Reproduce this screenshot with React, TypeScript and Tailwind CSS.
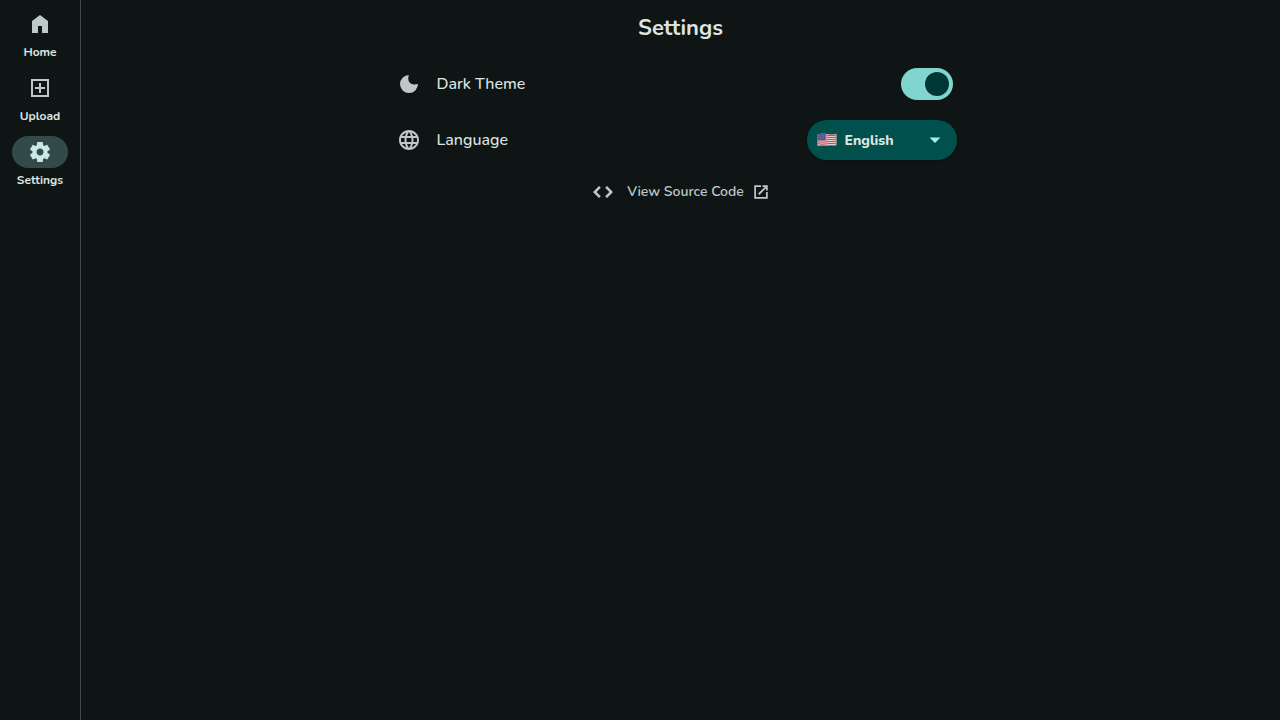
import { useState } from "react";

function Icon({ d, className = "size-6" }: { d: string; className?: string }) {
  return (
    <svg viewBox="0 0 24 24" fill="currentColor" fillRule="evenodd" aria-hidden="true" className={className}>
      <path d={d} />
    </svg>
  );
}

const icons = {
  home: "M4 21V9l8-6 8 6v12h-6v-7h-4v7H4Z",
  upload: "M11 17h2v-4h4v-2h-4V7h-2v4H7v2h4v4ZM3 21V3h18v18H3Zm2-2h14V5H5v14Z",
  settings:
    "m9.25 22-.4-3.2q-.325-.125-.612-.3-.288-.175-.563-.375L4.7 19.375l-2.75-4.75 2.575-1.95Q4.5 12.5 4.5 12.337v-.675q0-.162.025-.337L1.95 9.375l2.75-4.75 2.975 1.25q.275-.2.575-.375.3-.175.6-.3L9.25 2h5.5l.4 3.2q.325.125.613.3.287.175.562.375l2.975-1.25 2.75 4.75-2.575 1.95q.025.175.025.337v.675q0 .163-.05.338l2.575 1.95-2.75 4.75-2.95-1.25q-.275.2-.575.375-.3.175-.6.3l-.4 3.2Zm2.8-6.5q1.45 0 2.475-1.025Q15.55 13.45 15.55 12q0-1.45-1.025-2.475Q13.5 8.5 12.05 8.5q-1.475 0-2.488 1.025Q8.55 10.55 8.55 12q0 1.45 1.012 2.475Q10.575 15.5 12.05 15.5Z",
  moon: "M12 21q-3.75 0-6.375-2.625T3 12q0-3.75 2.625-6.375T12 3q-.75 1.2-.75 3.750 0 2.500 1.550 4.100 1.600 1.550 4.100 1.550 2.550 0 4.100-.4 0 3.750-2.625 6.375T12 21Z",
  globe:
    "M11.99 2C6.47 2 2 6.48 2 12s4.47 10 9.99 10C17.52 22 22 17.52 22 12S17.52 2 11.99 2Zm6.93 6h-2.95a15.65 15.65 0 0 0-1.38-3.56A8.03 8.03 0 0 1 18.92 8ZM12 4.04c.83 1.2 1.48 2.53 1.91 3.96h-3.82c.43-1.43 1.08-2.76 1.91-3.96ZM4.26 14C4.1 13.36 4 12.69 4 12s.1-1.36.26-2h3.38c-.08.66-.14 1.32-.14 2s.06 1.34.14 2H4.26Zm.82 2h2.95c.32 1.25.78 2.45 1.38 3.56A7.99 7.99 0 0 1 5.08 16Zm2.95-8H5.08a7.99 7.99 0 0 1 4.33-3.56A15.65 15.65 0 0 0 8.03 8ZM12 19.96c-.83-1.2-1.48-2.53-1.91-3.96h3.82A14.1 14.1 0 0 1 12 19.96ZM14.34 14H9.66c-.09-.66-.16-1.32-.16-2s.07-1.35.16-2h4.68c.09.65.16 1.32.16 2s-.07 1.34-.16 2Zm.25 5.56c.6-1.11 1.06-2.31 1.38-3.56h2.95a8.03 8.03 0 0 1-4.33 3.56ZM16.36 14c.08-.66.14-1.32.14-2s-.06-1.34-.14-2h3.38c.16.64.26 1.31.26 2s-.1 1.36-.26 2h-3.38Z",
  code: "m8 18-6-6 6-6 1.800 1.800L5.600 12l4.200 4.200L8 18Zm8 0-1.800-1.800 4.200-4.200-4.200-4.200L16 6l6 6-6 6Z",
  open: "M3 21V3h9v2.300H5.300v13.400h13.400V12H21v9H3Zm6.850-5.150-1.700-1.700L17.100 5.300H14V3h7v7h-2.300V7L9.850 15.850Z",
  caret: "m12 15-5.500-5.500h11L12 15Z",
};

const stripes = [2, 4, 6, 8, 10, 12];

function Flag() {
  return (
    <svg viewBox="0 0 20 14" aria-hidden="true" className="h-[14px] w-5">
      <defs>
        <clipPath id="cloth">
          <path d="M.5 1.5Q5 0 10 1t9.500-.3v11.500Q15 13.500 10 12.700T.5 13.200Z" />
        </clipPath>
      </defs>
      <g clipPath="url(#cloth)">
        <rect width="20" height="14" fill="#e8d9da" />
        {stripes.map((y) => (
          <path key={y} d={`M0 ${y + 0.5}Q5 ${y - 0.8} 10 ${y + 0.2}T20 ${y}`} fill="none" stroke="#c4434f" />
        ))}
        <path d="M0 .9Q5-.3 10 .7T20 .5" fill="none" stroke="#c4434f" />
        <path d="M0 0h8.500v7.200H0Z" fill="#50548c" />
        <path d="M1.500 2.500h6.500M1.500 4.200h6.500M1.500 5.900h6.500" stroke="#9799bb" strokeWidth=".6" strokeDasharray=".7 .9" />
      </g>
    </svg>
  );
}

const pages = [
  { label: "Home", icon: icons.home },
  { label: "Upload", icon: icons.upload },
  { label: "Settings", icon: icons.settings },
];

export default function App() {
  const [dark, setDark] = useState(true);
  const current = "Settings";

  return (
    <div className="flex min-h-screen bg-[#0f1514] font-['Nunito','Open_Sans','Noto_Sans',sans-serif] text-[#dee4e2]">
      <nav className="flex w-[81px] shrink-0 flex-col gap-3 border-r border-[#3f4948] pt-2">
        {pages.map(({ label, icon }) => {
          const active = label === current;
          return (
            <a
              key={label}
              href={`#${label.toLowerCase()}`}
              aria-current={active ? "page" : undefined}
              className="flex flex-col items-center gap-1 text-xs leading-4 font-bold"
            >
              <span
                className={
                  active
                    ? "flex h-8 w-14 items-center justify-center rounded-full bg-[#324b4a] text-[#cce8e6]"
                    : "flex h-8 w-14 items-center justify-center rounded-full text-[#bec9c7]"
                }
              >
                <Icon d={icon} />
              </span>
              {label}
            </a>
          );
        })}
      </nav>

      <main className="flex flex-1 flex-col items-center">
        <h1 className="py-3 text-[22px] leading-8 font-bold">Settings</h1>

        <div className="flex w-full max-w-[568px] flex-col">
          <div className="flex h-14 items-center pr-3">
            <label htmlFor="dark-theme" className="flex flex-1 items-center gap-4 text-base font-medium">
              <span className="text-[#bec9c7]">
                <Icon d={icons.moon} />
              </span>
              Dark Theme
            </label>
            <input
              id="dark-theme"
              type="checkbox"
              role="switch"
              checked={dark}
              onChange={(e) => setDark(e.target.checked)}
              className="flex h-8 w-[52px] appearance-none items-center rounded-full bg-[#3f4948] px-1 before:size-6 before:rounded-full before:bg-[#003736] checked:justify-end checked:bg-[#80d5d1]"
            />
          </div>

          <div className="flex h-14 items-center pr-2">
            <label htmlFor="language" className="flex flex-1 items-center gap-4 text-base font-medium">
              <span className="text-[#bec9c7]">
                <Icon d={icons.globe} />
              </span>
              Language
            </label>
            <div className="grid h-10 w-[150px] grid-cols-1 items-center rounded-full bg-[#00504d] shadow-sm">
              <select
                id="language"
                className="col-start-1 row-start-1 h-10 appearance-none rounded-full bg-transparent pt-px pr-10 pl-[38px] text-sm font-extrabold"
              >
                <option>English</option>
              </select>
              <span className="pointer-events-none col-start-1 row-start-1 flex items-center justify-between px-[10px] text-[#9cf1ed]">
                <Flag />
                <Icon d={icons.caret} />
              </span>
            </div>
          </div>
        </div>

        <a href="#source" className="mt-1 flex h-10 items-center gap-3 text-sm font-semibold text-[#bec9c7]">
          <Icon d={icons.code} />
          <span className="flex items-center gap-2">
            View Source Code
            <Icon d={icons.open} className="size-[18px]" />
          </span>
        </a>
      </main>
    </div>
  );
}
